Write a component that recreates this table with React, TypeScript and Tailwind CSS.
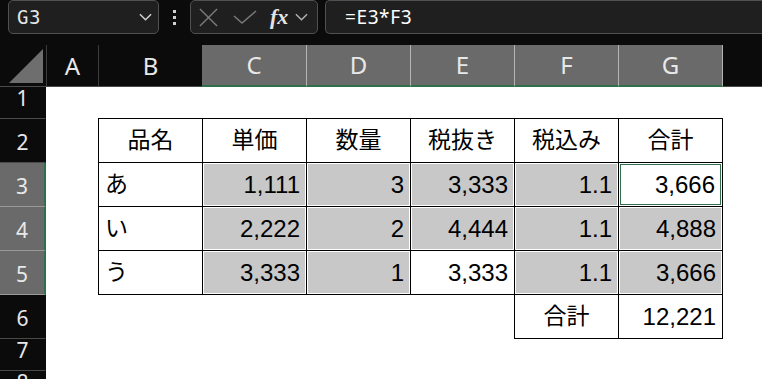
const ui = { fontFamily: '"Noto Sans", "Open Sans", sans-serif' };
const cellFont = { fontFamily: '"Liberation Sans", "Noto Sans CJK JP", sans-serif' };

type Cell = { text: string; align: "left" | "center" | "right"; fill?: boolean; active?: boolean };

const rows: Cell[][] = [
  [
    { text: "品名", align: "center" },
    { text: "単価", align: "center" },
    { text: "数量", align: "center" },
    { text: "税抜き", align: "center" },
    { text: "税込み", align: "center" },
    { text: "合計", align: "center" },
  ],
  [
    { text: "あ", align: "left" },
    { text: "1,111", align: "right", fill: true },
    { text: "3", align: "right", fill: true },
    { text: "3,333", align: "right", fill: true },
    { text: "1.1", align: "right", fill: true },
    { text: "3,666", align: "right", active: true },
  ],
  [
    { text: "い", align: "left" },
    { text: "2,222", align: "right", fill: true },
    { text: "2", align: "right", fill: true },
    { text: "4,444", align: "right", fill: true },
    { text: "1.1", align: "right", fill: true },
    { text: "4,888", align: "right", fill: true },
  ],
  [
    { text: "う", align: "left" },
    { text: "3,333", align: "right", fill: true },
    { text: "1", align: "right", fill: true },
    { text: "3,333", align: "right" },
    { text: "1.1", align: "right", fill: true },
    { text: "3,666", align: "right", fill: true },
  ],
];

function Chevron({ className }: { className?: string }) {
  return (
    <svg viewBox="0 0 14 8" className={className} fill="none" stroke="currentColor" strokeWidth="1.6">
      <polyline points="1,1 7,7 13,1" />
    </svg>
  );
}

function GridCell({ cell }: { cell: Cell }) {
  const justify =
    cell.align === "right" ? "justify-end pr-[5px]" : cell.align === "center" ? "justify-center" : "justify-start pl-[5px]";
  let inner = "bg-white";
  if (cell.fill) inner = "bg-[#c8c8c8]";
  if (cell.active) inner = "bg-white border border-[#2f6f4a]";
  const size = cell.align === "right" ? "text-[24px]" : "text-[23px]";
  return (
    <div className="w-[104px] h-[44px] border-r border-b border-black p-px">
      <div className={`h-full flex items-center ${justify} ${inner}`}>
        <span className={`${size} leading-none text-black`}>{cell.text}</span>
      </div>
    </div>
  );
}

function FormulaBar() {
  return (
    <div className="h-[45px] flex items-start text-[#e4e4e4]">
      <div className="ml-[8px] w-[151px] h-[34px] rounded-[5px] border border-[#505050] bg-[#1f1f1f] flex items-center pl-[8px] pr-[6px]">
        <span className="text-[19px] font-light tracking-[0.5px]" style={{ fontFamily: '"DejaVu Sans Mono", monospace' }}>
          G3
        </span>
        <Chevron className="ml-auto w-[13px] h-[8px] text-[#d0d0d0]" />
      </div>
      <div className="w-[31px] h-[34px] flex flex-col items-center justify-center gap-[3px]">
        <span className="w-[3px] h-[3px] bg-[#d0d0d0]" />
        <span className="w-[3px] h-[3px] bg-[#d0d0d0]" />
        <span className="w-[3px] h-[3px] bg-[#d0d0d0]" />
      </div>
      <div className="w-[128px] h-[34px] rounded-[5px] border border-[#505050] bg-[#1f1f1f] flex items-center pl-[8px]">
        <svg viewBox="0 0 20 20" className="w-[19px] h-[19px] text-[#7a7a7a]" fill="none" stroke="currentColor" strokeWidth="1.5">
          <line x1="1" y1="1" x2="19" y2="19" />
          <line x1="19" y1="1" x2="1" y2="19" />
        </svg>
        <svg viewBox="0 0 24 14" className="ml-[15px] w-[24px] h-[14px] text-[#7a7a7a]" fill="none" stroke="currentColor" strokeWidth="1.5">
          <polyline points="1,6 9,13 23,1" />
        </svg>
        <span
          className="ml-[13px] text-[22px] italic font-bold text-[#e4e4e4] leading-none"
          style={{ fontFamily: '"Liberation Serif", "DejaVu Serif", serif' }}
        >
          fx
        </span>
        <Chevron className="ml-[7px] w-[13px] h-[8px] text-[#b0b0b0]" />
      </div>
      <div className="ml-[7px] flex-1 h-[34px] rounded-l-[5px] border border-r-0 border-[#505050] bg-[#1f1f1f] flex items-center pl-[19px]">
        <span className="text-[19px] text-white tracking-[0.6px]" style={ui}>
          =E3*F3
        </span>
      </div>
    </div>
  );
}

function ColumnHeaders() {
  const selected = ["C", "D", "E", "F", "G"];
  const widths: Record<string, string> = { C: "w-[105px]", D: "w-[104px]", E: "w-[104px]", F: "w-[104px]", G: "w-[104px]" };
  return (
    <div className="h-[42px] flex text-[#e8e8e8] text-[24px]" style={ui}>
      <div className="w-[47px] border-r border-b border-r-[#3c3c3c] border-b-[#4a4a4a] flex items-end justify-end pr-[3px] pb-[3px]">
        <svg viewBox="0 0 34 34" className="w-[34px] h-[34px]">
          <polygon points="34,0 34,34 0,34" fill="#6e6e6e" />
        </svg>
      </div>
      <div className="w-[52px] border-r border-b border-r-[#3c3c3c] border-b-[#4a4a4a] flex items-center justify-center">A</div>
      <div className="w-[103px] border-b border-b-[#4a4a4a] flex items-center justify-center">B</div>
      {selected.map((c) => (
        <div
          key={c}
          className={`${widths[c]} bg-[#6a6a6a] border-r border-r-[#b4b4b4] border-b-2 border-b-[#2f6f4a] flex items-center justify-center`}
        >
          {c}
        </div>
      ))}
      <div className="flex-1 border-b border-b-[#4a4a4a]" />
    </div>
  );
}

function RowHeaders() {
  const items = [
    { n: "1", h: "h-[32px]", sel: false },
    { n: "2", h: "h-[44px]", sel: false },
    { n: "3", h: "h-[44px]", sel: true },
    { n: "4", h: "h-[44px]", sel: true },
    { n: "5", h: "h-[44px]", sel: true },
    { n: "6", h: "h-[44px]", sel: false },
    { n: "7", h: "h-[32px]", sel: false },
    { n: "8", h: "h-[32px]", sel: false },
  ];
  return (
    <div className="w-[46px] shrink-0 flex flex-col text-[#e8e8e8] text-[21px]" style={ui}>
      {items.map((r) => (
        <div
          key={r.n}
          className={`${r.h} shrink-0 flex items-end justify-center pb-[9px] leading-none border-b border-r ${
            r.sel
              ? "bg-[#6a6a6a] border-b-[#9a9a9a] border-r-2 border-r-[#2f6f4a]"
              : "bg-[#0b0b0b] border-b-[#4a4a4a] border-r-[#0b0b0b]"
          }`}
        >
          {r.n}
        </div>
      ))}
    </div>
  );
}

export default function App() {
  return (
    <div className="w-[762px] h-[379px] overflow-hidden bg-[#0b0b0b] flex flex-col">
      <FormulaBar />
      <ColumnHeaders />
      <div className="flex flex-1 min-h-0">
        <RowHeaders />
        <div className="flex-1 bg-white pl-[52px] pt-[31px]" style={cellFont}>
          <div className="inline-flex flex-col border-l border-t border-black">
            {rows.map((r, i) => (
              <div key={i} className="flex">
                {r.map((c, j) => (
                  <GridCell key={j} cell={c} />
                ))}
              </div>
            ))}
          </div>
          <div className="flex ml-[416px]">
            <div className="w-[105px] h-[44px] border-l border-r border-b border-black flex items-center justify-center">
              <span className="text-[23px] leading-none text-black">合計</span>
            </div>
            <div className="w-[104px] h-[44px] border-r border-b border-black flex items-center justify-end pr-[6px]">
              <span className="text-[24px] leading-none text-black">12,221</span>
            </div>
          </div>
        </div>
      </div>
    </div>
  );
}
